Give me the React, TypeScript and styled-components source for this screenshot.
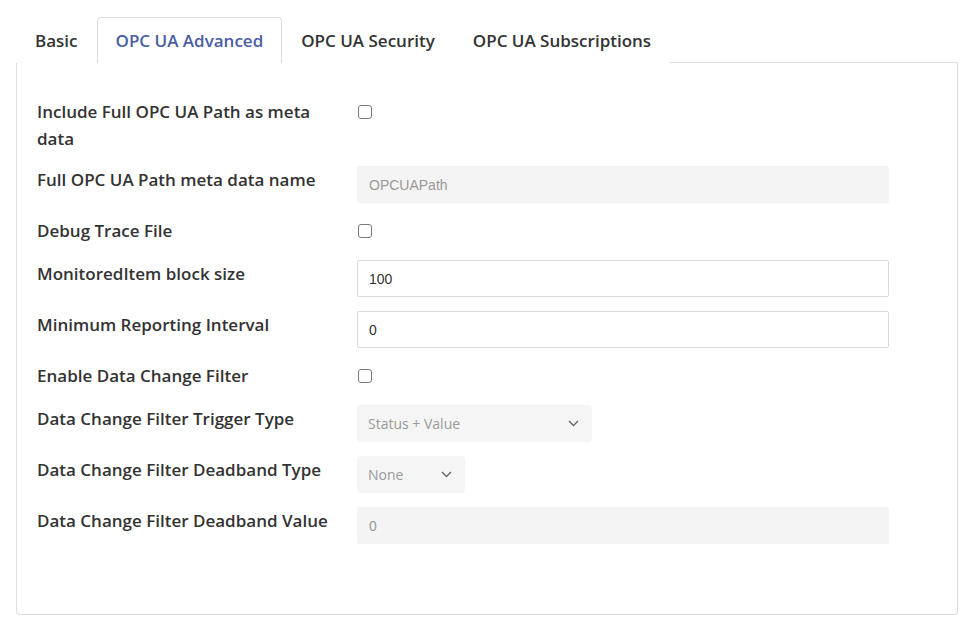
import styled, { createGlobalStyle } from 'styled-components';

const GlobalStyle = createGlobalStyle`
  body {
    margin: 0;
    background: #fff;
    font-family: "Open Sans", "Noto Sans", sans-serif;
  }
`;

const tabs = ['Basic', 'OPC UA Advanced', 'OPC UA Security', 'OPC UA Subscriptions'];

const Chevron = () => (
  <svg width="11" height="7" viewBox="0 0 11 7" fill="none">
    <path d="M1 1l4.5 4.5L10 1" stroke="#666" strokeWidth="1.4" />
  </svg>
);

const App = () => (
  <Page>
    <GlobalStyle />
    <TabBar>
      {tabs.map((t) => (
        <Tab key={t} $active={t === 'OPC UA Advanced'}>
          {t}
        </Tab>
      ))}
    </TabBar>
    <Panel>
      <Form>
        <Row>
          <Label>Include Full OPC UA Path as meta data</Label>
          <Control>
            <Checkbox type="checkbox" />
          </Control>
        </Row>
        <Row>
          <Label>Full OPC UA Path meta data name</Label>
          <Control>
            <TextInput value="OPCUAPath" disabled readOnly />
          </Control>
        </Row>
        <Row>
          <Label>Debug Trace File</Label>
          <Control>
            <Checkbox type="checkbox" />
          </Control>
        </Row>
        <Row>
          <Label>MonitoredItem block size</Label>
          <Control>
            <TextInput value="100" readOnly />
          </Control>
        </Row>
        <Row>
          <Label>Minimum Reporting Interval</Label>
          <Control>
            <TextInput value="0" readOnly />
          </Control>
        </Row>
        <Row>
          <Label>Enable Data Change Filter</Label>
          <Control>
            <Checkbox type="checkbox" />
          </Control>
        </Row>
        <Row>
          <Label>Data Change Filter Trigger Type</Label>
          <Control>
            <Select $width={235}>
              Status + Value
              <Chevron />
            </Select>
          </Control>
        </Row>
        <Row>
          <Label>Data Change Filter Deadband Type</Label>
          <Control>
            <Select $width={108}>
              None
              <Chevron />
            </Select>
          </Control>
        </Row>
        <Row>
          <Label>Data Change Filter Deadband Value</Label>
          <Control>
            <TextInput value="0" disabled readOnly />
          </Control>
        </Row>
      </Form>
    </Panel>
  </Page>
);

export default App;

const Page = styled.div`
  padding: 17px 18px 15px 16px;
`;

const TabBar = styled.div`
  display: flex;
  border-bottom: 1px solid #dedede;
`;

const Tab = styled.div<{ $active?: boolean }>`
  flex-shrink: 0;
  white-space: nowrap;
  height: 46px;
  box-sizing: border-box;
  padding: 0 18px;
  display: flex;
  align-items: center;
  font-size: 17px;
  font-weight: 600;
  color: ${({ $active }) => ($active ? '#4a5da6' : '#333')};
  border: 1px solid ${({ $active }) => ($active ? '#dedede' : 'transparent')};
  border-bottom: none;
  border-radius: 4px 4px 0 0;
  background: #fff;
  margin-bottom: -1px;
`;

const Panel = styled.div`
  border: 1px solid #dcdcdc;
  border-top: none;
  border-radius: 0 0 4px 4px;
  height: 552px;
  box-sizing: border-box;
`;

const Form = styled.div`
  padding: 35px 0 0 20px;
  display: flex;
  flex-direction: column;
  gap: 14px;
`;

const Row = styled.div`
  display: flex;
  align-items: flex-start;
  min-height: 29px;
`;

const Label = styled.div`
  width: 300px;
  padding-right: 20px;
  font-size: 17px;
  font-weight: 600;
  line-height: 27px;
  color: #333;
`;

const Control = styled.div`
  width: 532px;
  display: flex;
  align-items: flex-start;
`;

const Checkbox = styled.input`
  appearance: none;
  width: 14px;
  height: 14px;
  margin: 7px 0 0 1px;
  border: 1px solid #7a7a7a;
  border-radius: 3px;
  background: #fff;
`;

const TextInput = styled.input`
  width: 100%;
  height: 37px;
  box-sizing: border-box;
  border: 1px solid ${({ disabled }) => (disabled ? '#f4f4f4' : '#dadada')};
  background: ${({ disabled }) => (disabled ? '#f4f4f4' : '#fff')};
  border-radius: 2px;
  padding: 0 11px;
  font-family: "Liberation Sans", Arial, sans-serif;
  font-size: 14px;
  color: ${({ disabled }) => (disabled ? '#999' : '#333')};
  outline: none;
`;

const Select = styled.div<{ $width: number }>`
  width: ${({ $width }) => $width}px;
  height: 37px;
  box-sizing: border-box;
  display: flex;
  align-items: center;
  justify-content: space-between;
  padding: 0 13px 0 11px;
  background: #f5f5f5;
  border-radius: 4px;
  font-size: 14px;
  color: #9a9a9a;
`;
